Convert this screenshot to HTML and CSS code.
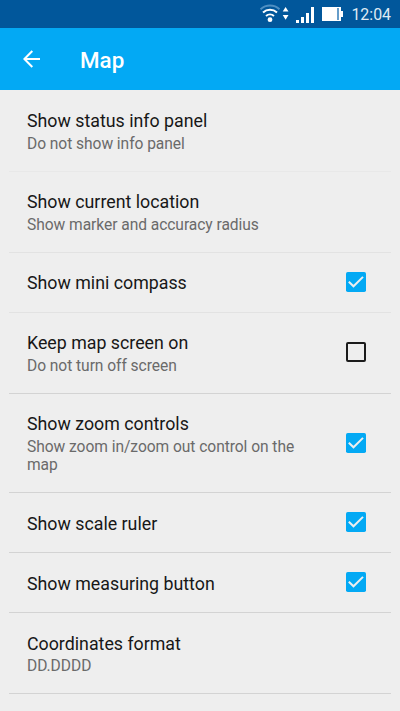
FILE: index.html
```html
<!DOCTYPE html>
<html lang="en">
<head>
<meta charset="utf-8">
<title>Map</title>
<link rel="stylesheet" href="styles.css">
</head>
<body>
<svg class="defs" width="0" height="0" aria-hidden="true">
  <symbol id="checked" viewBox="0 0 20 20">
    <rect width="20" height="20" rx="1.8" fill="#03a9f4"/>
    <path d="M2.8 9.7l4.7 4.6 9.5-9.4" fill="none" stroke="#eee" stroke-width="2"/>
  </symbol>
  <symbol id="unchecked" viewBox="0 0 20 20">
    <rect x="1" y="1" width="18" height="18" rx="1" fill="none" stroke="#1b1b1b" stroke-width="2"/>
  </symbol>
</svg>
<div class="status">
  <svg class="status-icons" width="85" height="28" viewBox="0 0 85 28">
    <g fill="none" stroke="#fff" stroke-width="2">
      <path d="M.5 9.3a14 14 0 0 1 19 0" stroke="#4f8fc2"/>
      <path d="M3 12.4a10.4 10.4 0 0 1 14 0"/>
      <path d="M6 16a6.2 6.2 0 0 1 8 0"/>
    </g>
    <circle cx="10" cy="19.7" r="2.4" fill="#fff"/>
    <path d="M22.7 11.5L25.6 7l2.9 4.5zM22.7 15h5.8l-2.9 4.7z" fill="#fff"/>
    <path d="M36 20h3v3h-3zM41 17h3v6h-3zM46 13h3v10h-3zM51 7h3v16h-3z" fill="#fff"/>
    <path d="M62 7h19v4h2v6h-2v4H62z" fill="#fff"/>
    <path d="M77 8h2v12h-2z" fill="#669dca"/>
  </svg>
  <span class="clock">12:04</span>
</div>
<header class="bar">
  <svg class="back" width="18" height="18" viewBox="0 0 18 18"><path d="M9.3 1L1.4 9l7.9 8M1.4 9H17" fill="none" stroke="#fff" stroke-width="2"/></svg>
  <h1>Map</h1>
</header>
<main class="list">
  <div class="row faint"><div class="text"><div class="title">Show status info panel</div><div class="summary">Do not show info panel</div></div></div>
  <div class="row light"><div class="text"><div class="title">Show current location</div><div class="summary">Show marker and accuracy radius</div></div></div>
  <div class="row light"><div class="text"><div class="title">Show mini compass</div></div><svg class="box"><use href="#checked"/></svg></div>
  <div class="row"><div class="text"><div class="title">Keep map screen on</div><div class="summary">Do not turn off screen</div></div><svg class="box empty"><use href="#unchecked"/></svg></div>
  <div class="row"><div class="text"><div class="title">Show zoom controls</div><div class="summary">Show zoom in/zoom out control on the map</div></div><svg class="box"><use href="#checked"/></svg></div>
  <div class="row low"><div class="text"><div class="title">Show scale ruler</div></div><svg class="box"><use href="#checked"/></svg></div>
  <div class="row low"><div class="text"><div class="title">Show measuring button</div></div><svg class="box"><use href="#checked"/></svg></div>
  <div class="row low"><div class="text"><div class="title">Coordinates format</div><div class="summary">DD.DDDD</div></div></div>
</main>
</body>
</html>
```
FILE: styles.css
```css
* { box-sizing: border-box; }
body {
  margin: 0;
  height: 711px;
  overflow: hidden;
  background: #eee;
  font-family: Roboto, "Liberation Sans", sans-serif;
}
.defs { display: none; }
.status {
  height: 28px;
  padding-right: 9px;
  background: #01579b;
  display: flex;
  align-items: center;
  justify-content: flex-end;
  gap: 6px;
}
.clock { color: #dfeaf3; font-size: 15.9px; line-height: 28px; padding-top: 2px; }
.bar {
  height: 62px;
  padding: 0 22.5px;
  background: #03a9f4;
  color: #fff;
  display: flex;
  align-items: center;
  gap: 39.5px;
}
h1 { margin: 0; font-size: 22.4px; font-weight: 500; line-height: 26px; padding-top: 2px; }
.list { padding: 1px 9px 0; }
.row {
  display: flex;
  align-items: center;
  justify-content: space-between;
  padding: 18px 25px 17px 18px;
  border-bottom: 1px solid #d3d3d3;
}
.row.faint { border-color: #e8e8e8; }
.row.light { border-color: #e2e2e2; }
.text { max-width: 285px; }
.title { color: #171717; font-size: 17.8px; line-height: 24px; }
.summary { color: #6a6a6a; font-size: 15.6px; letter-spacing: -.06px; line-height: 18px; padding: 2px 0 1px; }
.low .title { padding-top: 1px; margin-bottom: -1px; }
.box { width: 20px; height: 20px; flex: none; margin-bottom: 2px; }
.box.empty { margin-bottom: 3px; }
```
